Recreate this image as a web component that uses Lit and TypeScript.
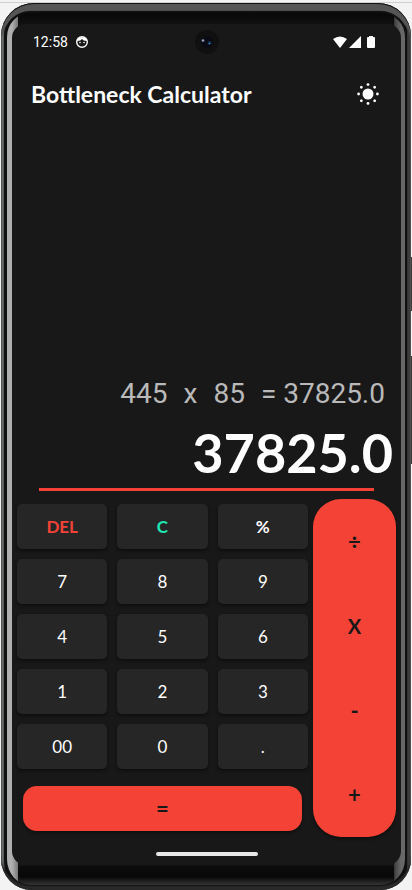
import { LitElement, html, css, svg } from "lit";
import { customElement, state } from "lit/decorators.js";

interface Key { label: string; tone?: string }

const KEYS: Key[] = [
  { label: "DEL", tone: "del" }, { label: "C", tone: "clear" }, { label: "%", tone: "pct" },
  { label: "7" }, { label: "8" }, { label: "9" },
  { label: "4" }, { label: "5" }, { label: "6" },
  { label: "1" }, { label: "2" }, { label: "3" },
  { label: "00" }, { label: "0" }, { label: "." },
];
const OPERATORS = ["÷", "X", "-", "+"];

@customElement("app-root")
export class AppRoot extends LitElement {
  static styles = css`
    :host { display: block; background: #f3f3f3; }
    * { box-sizing: border-box; }
    .page { position: relative; min-height: 100vh; display: flex; padding: 3px 1px 0 1px; overflow: hidden; background: linear-gradient(#f3f3f3 2px, #cfcfcf 2px, #cfcfcf 3px, #f3f3f3 3px); }
    .side { position: absolute; right: 0; width: 3px; background: linear-gradient(90deg, #111, #454541); }
    .power { top: 257px; height: 54px; }
    .volume { top: 356px; height: 108px; }
    .phone { position: relative; flex: 1; display: flex; border-radius: 33px 33px 31px 31px; padding: 8px 4px 5px 3px;
      background: linear-gradient(90deg, #333 0, #777b7c 1px, #4c5051 3px, #111 4px, #111 calc(100% - 4px), #555 calc(100% - 3px), #222 calc(100% - 2px), #555 calc(100% - 1px)); box-shadow: inset 0 1px 0 #111, inset 0 8px 1px #555, inset 0 -4px 1px #292929; }
    .rim { flex: 1; display: flex; border-radius: 26px; padding: 11px 4px 20px 5px; border: solid #101010; border-width: 2px 2px 0 3px;
      background: linear-gradient(#080808 0, #101010 11px, #151515 12px, #151515 calc(100% - 20px), #0c0c0c calc(100% - 19px), #080808 calc(100% - 8px), #343434 100%) center / calc(100% - 22px) 100% no-repeat, linear-gradient(90deg, #b0b0b0 5px, #777 11px, #151515 12px, #151515 calc(100% - 12px), #444 calc(100% - 10px), #686868 calc(100% - 4px)); }
    .screen { flex: 1; min-width: 0; display: flex; flex-direction: column; background: #181818; border-radius: 14px; color: #fff; font-family: Lato, sans-serif; }
    .status { height: 36px; display: grid; grid-template-columns: 1fr 24px 1fr; align-items: center; padding: 0 21px; }
    .status svg { display: block; }
    .clock { display: flex; align-items: center; gap: 8px; font: 14px Roboto, sans-serif; }
    .signals { display: flex; justify-content: flex-end; padding-right: 4px; }
    .bar { height: 68px; display: flex; align-items: center; justify-content: space-between; padding: 0 22px 0 19px; }
    h1 { margin: 0; font-size: 23px; line-height: 32px; font-weight: 700; white-space: nowrap; }
    button { appearance: none; border: 0; padding: 0; margin: 0; font-family: inherit; cursor: pointer; }
    .theme { background: none; height: 26px; }
    .display { flex: 1; display: flex; flex-direction: column; justify-content: flex-end; text-align: right; }
    .expr { display: flex; justify-content: flex-end; gap: 16px; margin: 0; padding-right: 16px; font: 28px/36px Roboto, sans-serif; color: #b9b9b9; }
    .result { display: block; padding: 6px 8px 0 0; font-size: 54px; line-height: 70px; font-weight: 700; }
    .rule { width: auto; height: 3px; margin: 0 27px; border: 0; background: #f44336; }
    .pad { display: grid; grid-template-columns: 1fr 83px; gap: 5px; padding: 8px 5px 15px; }
    .left { display: flex; flex-direction: column; gap: 17px; padding: 5px 0 6px; }
    .keys { display: grid; grid-template-columns: repeat(3, 1fr); gap: 10px; }
    .key { height: 45px; border-radius: 5px; background: #262626; color: #fff; font-size: 17px; box-shadow: 0 2px 3px #0f0f0f; }
    .del { color: #f44336; font-weight: 700; }
    .clear { color: #1de9b6; font-weight: 700; }
    .pct { font-weight: 700; }
    .equals { height: 45px; margin: 0 6px; border-radius: 14px; background: #f44336; color: #181818; font-size: 22px; font-weight: 700; box-shadow: 0 2px 3px #0f0f0f; }
    .ops { display: grid; grid-template-rows: repeat(4, 1fr); border-radius: 28px; background: #f44336; overflow: hidden; box-shadow: 0 2px 3px #0f0f0f; }
    .op { background: none; color: #181818; font-size: 22px; font-weight: 700; }
    .x { font-size: 20px; }
    .home { width: 102px; height: 4px; border-radius: 2px; background: #e8e8e8; margin: 0 auto 9px; }
  `;

  @state() private result = "37825.0";

  render() {
    return html`<div class="page">
      <span class="side power"></span><span class="side volume"></span>
      <div class="phone"><div class="rim"><main class="screen">
        <div class="status">
          <div class="clock"><span>12:58</span>
            <svg width="12" height="12" viewBox="0 0 12 12"><circle cx="6" cy="6" r="5.3" fill="none" stroke="#fff" stroke-width="1.4"/><path d="M1 5C1 0 11 0 11 5C8 5 7 4 6 3C5 4 4 5 1 5Z" fill="#fff"/><circle cx="4" cy="6.5" r=".8" fill="#fff"/><circle cx="8" cy="6.5" r=".8" fill="#fff"/></svg>
          </div>
          <svg width="24" height="24" viewBox="0 0 24 24"><circle cx="12" cy="12" r="12" fill="#101010"/><circle cx="12" cy="12" r="6" fill="#0a0b12"/><circle cx="8" cy="10.5" r="1.8" fill="#343c50"/><circle cx="8" cy="10.5" r=".9" fill="#b4bfd4"/><circle cx="14.5" cy="13" r="2" fill="#102a48"/><circle cx="14.5" cy="13.5" r=".8" fill="#4099cb"/></svg>
          <div class="signals"><svg width="43" height="13" viewBox="0 0 43 13" fill="#fff"><path d="M0 3Q7-2 14 3L7 12Z"/><path d="M28 0V12H16Z"/><path d="M35 1H36V0H40V1H41Q42 1 42 2V11Q42 12 41 12H35Q34 12 34 11V2Q34 1 35 1Z"/></svg></div>
        </div>
        <header class="bar"><h1>Bottleneck Calculator</h1>
          <button class="theme" aria-label="Toggle theme"><svg width="22" height="26" viewBox="0 0 22 26" fill="#fff"><circle cx="11" cy="13" r="5.5"/>${[0, 45, 90, 135, 180, 225, 270, 315].map((a) => svg`<circle cx="11" cy="3.6" r="1.4" transform="rotate(${a} 11 13)"/>`)}</svg></button>
        </header>
        <section class="display">
          <p class="expr"><span>445</span><span>x</span><span>85</span><span>= 37825.0</span></p>
          <output class="result">${this.result}</output>
          <hr class="rule">
        </section>
        <section class="pad">
          <div class="left">
            <div class="keys">${KEYS.map((k) => html`<button class="key ${k.tone ?? ""}">${k.label}</button>`)}</div>
            <button class="equals">=</button>
          </div>
          <div class="ops">${OPERATORS.map((o) => html`<button class="op ${o === "X" ? "x" : ""}">${o}</button>`)}</div>
        </section>
        <div class="home"></div>
      </main></div></div>
    </div>`;
  }
}
